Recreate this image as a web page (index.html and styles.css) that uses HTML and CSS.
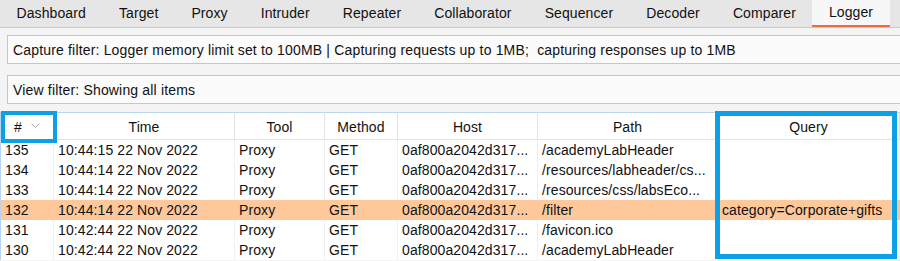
FILE: index.html
```html
<!DOCTYPE html>
<html lang="en">
<head>
  <meta charset="UTF-8">
  <title>Logger</title>
  <link rel="stylesheet" href="styles.css">
</head>
<body>
  <nav class="tabs">
    <div class="tab">Dashboard</div>
    <div class="tab">Target</div>
    <div class="tab">Proxy</div>
    <div class="tab">Intruder</div>
    <div class="tab">Repeater</div>
    <div class="tab">Collaborator</div>
    <div class="tab">Sequencer</div>
    <div class="tab">Decoder</div>
    <div class="tab">Comparer</div>
    <div class="tab active">Logger</div>
  </nav>

  <div class="filters">
    <div class="filter">Capture filter: Logger memory limit set to 100MB | Capturing requests up to 1MB;&nbsp; capturing responses up to 1MB</div>
    <div class="filter">View filter: Showing all items</div>
  </div>

  <div class="log">
    <table class="log-table">
      <colgroup>
        <col class="c-num">
        <col class="c-time">
        <col class="c-tool">
        <col class="c-method">
        <col class="c-host">
        <col class="c-path">
        <col>
      </colgroup>
      <thead>
        <tr>
          <th>#<svg class="sort" width="9" height="6" viewBox="0 0 9 6"><polyline points="0.5,0.5 4.5,4.5 8.5,0.5" fill="none" stroke="#b0b0b0" stroke-width="1"/></svg></th>
          <th>Time</th>
          <th>Tool</th>
          <th>Method</th>
          <th>Host</th>
          <th>Path</th>
          <th>Query</th>
        </tr>
      </thead>
      <tbody>
        <tr><td>135</td><td>10:44:15 22 Nov 2022</td><td>Proxy</td><td>GET</td><td>0af800a2042d317...</td><td>/academyLabHeader</td><td></td></tr>
        <tr><td>134</td><td>10:44:14 22 Nov 2022</td><td>Proxy</td><td>GET</td><td>0af800a2042d317...</td><td>/resources/labheader/cs...</td><td></td></tr>
        <tr><td>133</td><td>10:44:14 22 Nov 2022</td><td>Proxy</td><td>GET</td><td>0af800a2042d317...</td><td>/resources/css/labsEco...</td><td></td></tr>
        <tr class="selected"><td>132</td><td>10:44:14 22 Nov 2022</td><td>Proxy</td><td>GET</td><td>0af800a2042d317...</td><td>/filter</td><td>category=Corporate+gifts</td></tr>
        <tr><td>131</td><td>10:42:44 22 Nov 2022</td><td>Proxy</td><td>GET</td><td>0af800a2042d317...</td><td>/favicon.ico</td><td></td></tr>
        <tr><td>130</td><td>10:42:44 22 Nov 2022</td><td>Proxy</td><td>GET</td><td>0af800a2042d317...</td><td>/academyLabHeader</td><td></td></tr>
      </tbody>
    </table>

    <!-- highlight boxes drawn over the table -->
    <div class="mark mark-num"></div>
    <div class="mark mark-query"></div>
  </div>
</body>
</html>
```

FILE: styles.css
```css
* {
  margin: 0;
  padding: 0;
  box-sizing: border-box;
}

body {
  font-family: "Liberation Sans", Arial, sans-serif;
  font-size: 14px;
  letter-spacing: 0.1px;
  color: #111;
  background: #f4f4f4;
  overflow: hidden;
}

.tabs {
  display: flex;
  height: 28px;
  background: #e6e6e6;
  border-bottom: 1px solid #c9c9c9;
}

.tab {
  padding: 0 16.5px;
  line-height: 27px;
  white-space: nowrap;
}

.tab.active {
  background: #f7f7f7;
  height: 27px;
  border-bottom: 2px solid #f26b3a;
  line-height: 25px;
}

.filters {
  display: flex;
  flex-direction: column;
  gap: 11px;
  padding: 7px 0 0 7px;
}

.filter {
  height: 29px;
  line-height: 28px;
  padding-left: 5px;
  margin-right: -4px;
  letter-spacing: 0.17px;
  background: #fbfbfb;
  border: 1px solid #c6c6c6;
  white-space: nowrap;
}

.log {
  position: relative;
  margin-top: 8px;
}

.log-table {
  width: 100%;
  table-layout: fixed;
  border-collapse: collapse;
  background: #fff;
  border-top: 1px solid #b9d4ee;
  border-left: 1px solid #b9d4ee;
}

.c-num { width: 53px; }
.c-time { width: 181px; }
.c-tool { width: 90px; }
.c-method { width: 73px; }
.c-host { width: 140px; }
.c-path { width: 180px; }

.log-table th {
  height: 27px;
  padding-top: 1px;
  font-weight: normal;
  text-align: center;
  border-right: 1px solid #e2e2e2;
  border-bottom: 1px solid #e2e2e2;
}

.sort {
  margin-left: 9px;
  vertical-align: 3px;
}

.log-table td {
  height: 20px;
  padding: 1px 4px 0;
  white-space: nowrap;
  overflow: hidden;
  border-right: 1px solid #f0f0f0;
}

.log-table tr.selected td {
  background: #ffc89b;
  border-right-color: #ffc89b;
}

.mark {
  position: absolute;
  border: 4px solid #0ba1e4;
}

.mark-num {
  left: 1px;
  top: -1px;
  width: 56px;
  height: 32px;
}

.mark-query {
  left: 715px;
  top: -1px;
  width: 182px;
  height: 148px;
  border-width: 5px;
}
```
